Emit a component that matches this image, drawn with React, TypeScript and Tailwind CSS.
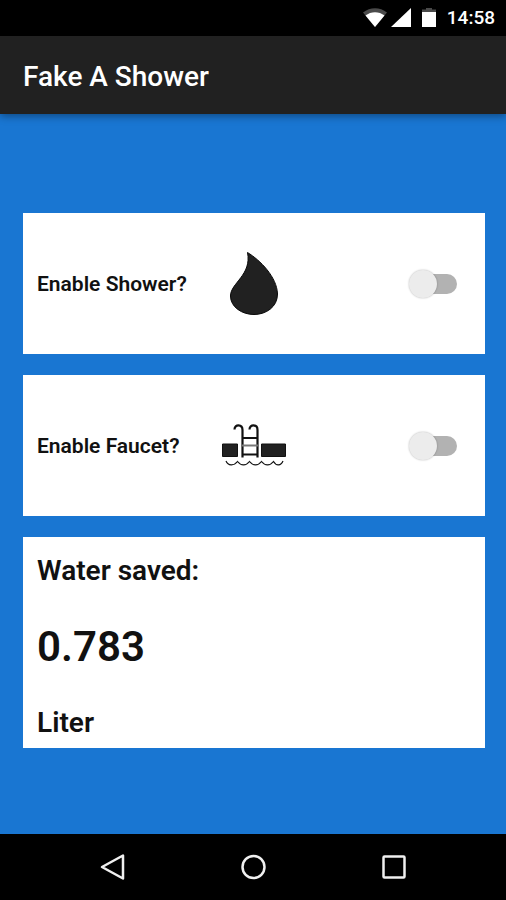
import { useState } from 'react'
import type { ReactNode } from 'react'

function StatusBar() {
  return (
    <div className="flex h-9 items-center justify-end bg-black pr-[11px] text-white">
      <svg viewBox="0 0 24 20" className="mr-1 h-5 w-6" aria-hidden="true">
        <path d="M0 4.5C7-1.3 17-1.3 24 4.5L12 19Z" fill="#4a4a4a" />
        <path d="M2.5 7.5C8 3 16 3 21.500 7.500L12 19Z" fill="#fff" />
      </svg>
      <svg viewBox="0 0 20 20" className="mr-[11px] h-5 w-5" aria-hidden="true">
        <path d="M0 19L20 0V19Z" fill="#fff" />
      </svg>
      <svg viewBox="0 0 14 20" className="mr-[11px] h-5 w-[14px]" aria-hidden="true">
        <path d="M4 0H10V1.500H14V4H0V1.500H4Z" fill="#4a4a4a" />
        <path d="M0 4H14V19H0Z" fill="#fff" />
      </svg>
      <time className="text-[19px] leading-6 font-medium">14:58</time>
    </div>
  )
}

function DropIcon() {
  return (
    <svg viewBox="0 0 64 64" className="h-16 w-16" aria-hidden="true">
      <path
        d="M25.500 0.500C38 8 55 25 55.500 42C55.500 55 44 62.500 32 62.500C20 62.500 8.500 55 8.500 44C8.500 31 30 23 25.500 0.500Z"
        fill="#212121"
        stroke="#080808"
        strokeWidth="1"
      />
    </svg>
  )
}

function PoolIcon() {
  return (
    <svg viewBox="0 0 64 64" className="h-16 w-16" fill="none" stroke="#111" aria-hidden="true">
      <path d="M0.500 30H15.500V42.500H0.500ZM39.500 30H63.500V42.500H39.500Z" fill="#212121" />
      <path d="M12.500 15.500C12.500 10 20.500 10 20.500 16V43.500M27.500 15.500C27.500 10 35.500 10 35.500 16V43.500" strokeWidth="2.200" />
      <path d="M20 24H36M20 40.500H36" strokeWidth="2" />
      <path d="M20 31.500H36" stroke="#777" strokeWidth="2" />
      <path
        d="M4 47C6 52 12 52 15.500 47.500C19 52 24 52 27.500 47.500C31 52 36 52 39.500 47.500C43 52 48 52 51.500 47.500C54 52 59 52 61 47"
        strokeWidth="1.200"
      />
    </svg>
  )
}

type ToggleCardProps = {
  id: string
  label: string
  icon: ReactNode
}

function ToggleCard({ id, label, icon }: ToggleCardProps) {
  const [enabled, setEnabled] = useState(false)

  return (
    <section className="grid h-[141px] grid-cols-[1fr_auto_1fr] items-center bg-white px-[14px]">
      <label htmlFor={id} className="text-[21px] leading-6 font-semibold whitespace-nowrap">
        {label}
      </label>
      {icon}
      <input
        id={id}
        type="checkbox"
        role="switch"
        checked={enabled}
        onChange={(e) => setEnabled(e.target.checked)}
        className="relative mr-[14px] h-7 w-12 cursor-pointer appearance-none justify-self-end before:absolute before:top-1 before:right-0 before:h-5 before:w-10 before:rounded-full before:bg-[#b2b2b2] after:absolute after:top-0 after:left-0 after:h-7 after:w-7 after:rounded-full after:bg-[#ececec] after:shadow-[0_0_2px_rgba(0,0,0,0.3)] checked:before:left-0 checked:before:bg-[#90bce8] checked:after:left-5 checked:after:bg-[#1976d2]"
      />
    </section>
  )
}

function NavBar() {
  return (
    <nav className="flex h-[66px] items-center justify-center gap-[108px] bg-black">
      <button type="button" aria-label="Back" className="flex h-8 w-8 items-center justify-center">
        <svg viewBox="0 0 32 32" className="h-8 w-8" fill="none" stroke="#f0f0f0" strokeWidth="2.500">
          <path d="M5 16L26 4.500V27.500Z" strokeLinejoin="round" />
        </svg>
      </button>
      <button type="button" aria-label="Home" className="flex h-8 w-8 items-center justify-center">
        <svg viewBox="0 0 32 32" className="h-8 w-8" fill="none" stroke="#f0f0f0" strokeWidth="2.500">
          <circle cx="16.500" cy="16" r="11" />
        </svg>
      </button>
      <button type="button" aria-label="Recent apps" className="flex h-8 w-8 items-center justify-center">
        <svg viewBox="0 0 32 32" className="h-8 w-8" fill="none" stroke="#f0f0f0" strokeWidth="2.500">
          <rect x="6.500" y="5.500" width="21" height="21" rx="1" />
        </svg>
      </button>
    </nav>
  )
}

export default function App() {
  return (
    <div className="flex min-h-screen flex-col bg-[#1976d2] font-['Roboto',sans-serif] text-[#111]">
      <StatusBar />
      <header className="flex h-[78px] items-center bg-[#212121] px-[23px] pt-1 shadow-[0_2px_8px_rgba(0,0,0,0.4)]">
        <h1 className="text-[28px] leading-8 font-medium text-white">Fake A Shower</h1>
      </header>

      <main className="flex flex-1 flex-col gap-[21px] pt-[99px] pr-[21px] pb-10 pl-[23px]">
        <ToggleCard id="shower" label="Enable Shower?" icon={<DropIcon />} />
        <ToggleCard id="faucet" label="Enable Faucet?" icon={<PoolIcon />} />
        <section className="flex flex-col bg-white px-[14px] pt-[18px] pb-[9px] font-semibold">
          <h2 className="text-[28px] leading-8">Water saved:</h2>
          <p className="py-9 text-[42px] leading-12">0.783</p>
          <p className="text-[28px] leading-8">Liter</p>
        </section>
      </main>

      <NavBar />
    </div>
  )
}
